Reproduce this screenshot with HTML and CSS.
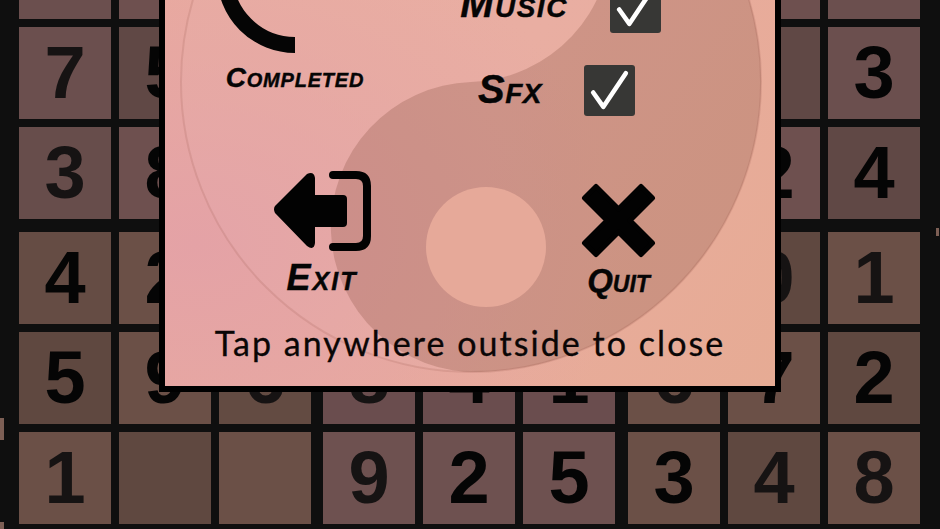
FILE: index.html
```html
<!DOCTYPE html>
<html lang="en">
<head>
<meta charset="utf-8">
<title>Sudoku menu</title>
<link rel="stylesheet" href="styles.css">
</head>
<body>
<main class="board">
  <div class="row">
    <div class="cell t1 ink-b">6</div><div class="cell t2"></div><div class="cell t1"></div><div class="cell t1"></div><div class="cell t1"></div><div class="cell t1"></div><div class="cell t1"></div><div class="cell t2"></div><div class="cell t1 ink-b">5</div>
  </div>
  <div class="row">
    <div class="cell t1 ink-s">7</div><div class="cell t3 ink-b">5</div><div class="cell t1"></div><div class="cell t1"></div><div class="cell t1"></div><div class="cell t1"></div><div class="cell t1"></div><div class="cell t3"></div><div class="cell t1 ink-b">3</div>
  </div>
  <div class="row band-end">
    <div class="cell t4 ink-s">3</div><div class="cell t2 ink-b">8</div><div class="cell t1"></div><div class="cell t1"></div><div class="cell t1"></div><div class="cell t1"></div><div class="cell t1"></div><div class="cell t2 ink-b">2</div><div class="cell t3 ink-b">4</div>
  </div>
  <div class="row">
    <div class="cell t5 ink-b">4</div><div class="cell t6 ink-b">2</div><div class="cell t5"></div><div class="cell t5"></div><div class="cell t5"></div><div class="cell t5"></div><div class="cell t5"></div><div class="cell t7 ink-s">0</div><div class="cell t6 ink-s">1</div>
  </div>
  <div class="row">
    <div class="cell t7 ink-b">5</div><div class="cell t6 ink-b">9</div><div class="cell t8 ink-s">6</div><div class="cell t9 ink-s">8</div><div class="cell t9 ink-b">4</div><div class="cell t9 ink-b">1</div><div class="cell t6 ink-s">6</div><div class="cell t6 ink-b">7</div><div class="cell t7 ink-b">2</div>
  </div>
  <div class="row">
    <div class="cell t6 ink-s">1</div><div class="cell t7"></div><div class="cell t6"></div><div class="cell t10 ink-s">9</div><div class="cell t10 ink-b">2</div><div class="cell t10 ink-b">5</div><div class="cell t6 ink-b">3</div><div class="cell t7 ink-s">4</div><div class="cell t6 ink-s">8</div>
  </div>
</main>

<i class="speck speck-left"></i>
<i class="speck speck-right"></i>
<i class="speck speck-corner"></i>

<section class="modal">
  <svg class="yinyang" viewBox="0 0 610 516" aria-hidden="true">
    <circle class="yy-disc" cx="306" cy="206" r="290"/>
    <path class="yy-dark" d="M296 -84A290 290 0 0 1 316 496A145 145 0 0 1 306 206A145 145 0 0 0 296 -84Z"/>
    <circle class="yy-dot" cx="321" cy="371" r="60"/>
  </svg>

  <div class="top">
    <div class="progress">
      <svg class="ring" viewBox="0 0 156 156" aria-hidden="true">
        <path d="M78 148A70 70 0 0 1 8 78A70 70 0 0 1 78 8"/>
      </svg>
      <div class="label completed">Completed</div>
    </div>
    <div class="settings">
      <div class="setting setting-music">
        <span class="label music">Music</span>
        <span class="check"><svg viewBox="0 0 50 50" aria-hidden="true"><path d="M9 27L19 41L41 8"/></svg></span>
      </div>
      <div class="setting setting-sfx">
        <span class="label sfx">Sfx</span>
        <span class="check"><svg viewBox="0 0 50 50" aria-hidden="true"><path d="M9 27L19 41L41 8"/></svg></span>
      </div>
    </div>
  </div>

  <div class="actions">
    <div class="action exit">
      <svg class="exit-icon" viewBox="0 0 98 80" aria-hidden="true">
        <path class="solid" d="M34 3Q41 0 42 7V24H70Q74 24 74 28V52Q74 56 70 56H42V72Q41 80 34 75L2 42Q0 38 2 35Z"/>
        <path class="door" d="M60 4H83Q94 4 94 15V65Q94 76 83 76H60"/>
      </svg>
      <div class="label exit-label">Exit</div>
    </div>
    <div class="action quit">
      <svg class="quit-icon" viewBox="0 0 75 75" aria-hidden="true">
        <path d="M15 3.500L37.500 26L60 3.500L71.500 15L49 37.500L71.500 60L60 71.500L37.500 49L15 71.500L3.500 60L26 37.500L3.500 15Z"/>
      </svg>
      <div class="label quit-label">Quit</div>
    </div>
  </div>

  <p class="hint">Tap anywhere outside to close</p>
</section>
</body>
</html>
```
FILE: styles.css
```css
html, body {
  margin: 0;
  height: 100%;
  overflow: hidden;
  background: #0f0f0f;
}

body {
  position: relative;
  width: 940px;
  height: 529px;
}

.board {
  display: flex;
  flex-direction: column;
  gap: 8px;
  margin-top: -73px;
  padding-left: 19px;
  font: 700 74px/92px "Liberation Sans", Arial, sans-serif;
}

.row {
  display: flex;
  gap: 8px;
}

.band-end {
  margin-bottom: 5px;
}

.cell {
  flex: 0 0 92px;
  height: 92px;
  text-align: center;
}

.cell:nth-child(3) { margin-right: 4px; }
.cell:nth-child(6) { margin-right: 5px; }

.ink-b { color: #050505; }
.ink-s { color: #161313; }

.t1 { background: #6b4f4e; }
.t2 { background: #6e504f; }
.t3 { background: #604845; }
.t4 { background: #674d4b; }
.t5 { background: #654c44; }
.t6 { background: #6b5047; }
.t7 { background: #5f4840; }
.t8 { background: #634b42; }
.t9 { background: #6a4d4e; }
.t10 { background: #6e5150; }

.speck {
  position: absolute;
  background: #7d5f55;
}
.speck-left { left: 0; top: 418px; width: 4px; height: 22px; }
.speck-right { left: 936px; top: 228px; width: 3px; height: 8px; }
.speck-corner { left: 0; top: 522px; width: 4px; height: 7px; }

.modal {
  position: absolute;
  left: 159px;
  top: -130px;
  box-sizing: border-box;
  width: 622px;
  height: 522px;
  border: 6px solid #000;
  background:
    radial-gradient(ellipse 430px 330px at 5% 72%, #e4a2a6 0%, rgba(228, 162, 166, 0) 100%),
    linear-gradient(125deg, #e9ab9e 0%, #e9ac9f 50%, #e6ab94 100%);
  color: #050505;
  overflow: hidden;
}

.yinyang {
  position: absolute;
  inset: 0;
  width: 610px;
  height: 516px;
}

.yy-disc {
  fill: rgba(255, 255, 255, 0.03);
  stroke: rgba(160, 95, 85, 0.2);
  stroke-width: 2;
}

.yy-dark {
  fill: rgba(120, 65, 50, 0.24);
}

.yy-dot {
  fill: #e6a999;
}

.top, .actions, .hint {
  position: relative;
}

.top {
  display: grid;
  grid-template-columns: 260px 266px;
  height: 295px;
  padding-top: 21px;
  box-sizing: border-box;
}

.label {
  font: italic 700 36px/30px "Liberation Sans", Arial, sans-serif;
  font-variant: small-caps;
  text-align: center;
  -webkit-text-stroke: 0.4px #050505;
}

.progress {
  display: flex;
  flex-direction: column;
  align-items: center;
}

.ring {
  display: block;
  width: 156px;
  height: 156px;
  flex: none;
}

.ring path {
  fill: none;
  stroke: #050505;
  stroke-width: 16;
}

.completed {
  margin-top: 10px;
  font-size: 28px;
  letter-spacing: 0.8px;
}

.settings {
  display: flex;
  flex-direction: column;
  align-items: center;
  gap: 32px;
  padding-top: 85px;
}

.setting {
  display: flex;
  align-items: center;
  gap: 42px;
}

.setting-music { margin-left: 5px; }
.setting-sfx { margin-right: 3px; }

.music {
  margin-bottom: 10px;
  font-size: 40px;
  letter-spacing: 1.500px;
}

.sfx {
  margin-bottom: 4px;
  font-size: 40px;
  letter-spacing: 0.5px;
}

.check {
  display: block;
  width: 51px;
  height: 51px;
  background: #373735;
  border-radius: 3px;
}

.check svg {
  display: block;
  width: 51px;
  height: 51px;
}

.check path {
  fill: none;
  stroke: #fff;
  stroke-width: 4.500;
  stroke-linejoin: round;
  stroke-linecap: round;
}

.actions {
  display: grid;
  grid-template-columns: 314px 279px;
  height: 152px;
}

.action {
  display: flex;
  flex-direction: column;
  align-items: center;
}

.quit { padding-top: 12px; }

.exit-icon { display: block; width: 98px; height: 80px; margin-bottom: 12px; }
.quit-icon { display: block; width: 75px; height: 75px; margin-bottom: 8px; }

.exit-icon .solid { fill: #020202; }
.exit-icon .door { fill: none; stroke: #020202; stroke-width: 8; stroke-linecap: round; }
.quit-icon path { fill: #020202; stroke: #020202; stroke-width: 5; stroke-linejoin: round; }

.exit-label { letter-spacing: 2px; }
.quit-label { font-size: 33px; }

.hint {
  margin: 0;
  text-align: center;
  font: 400 34px/40px "Lato", sans-serif;
  letter-spacing: 2.050px;
  color: #0a0606;
  -webkit-text-stroke: 0.3px #0a0606;
}
```
